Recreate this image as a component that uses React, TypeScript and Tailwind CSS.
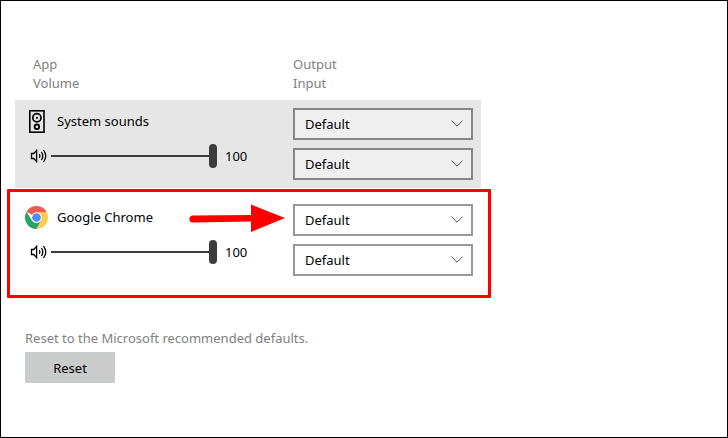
import { useId, useState } from 'react';
import type { ReactNode } from 'react';
import { clsx } from 'clsx';

function SpeakerIcon() {
  return (
    <svg viewBox="0 0 23 23" className="w-[23px] h-[23px]" fill="none" stroke="black" aria-hidden="true">
      <rect x="4.8" y="0.8" width="14.2" height="21.4" strokeWidth="1.6" />
      <circle cx="11.9" cy="7.8" r="4.1" strokeWidth="1.7" />
      <circle cx="11.9" cy="7.8" r="1.1" fill="black" stroke="none" />
      <circle cx="11.9" cy="16.8" r="2.3" strokeWidth="1.8" />
    </svg>
  );
}

function ChromeIcon() {
  return (
    <svg viewBox="0 0 48 48" className="w-[23px] h-[23px]" aria-hidden="true">
      <path d="M24 24 L3.2 12 A24 24 0 0 1 44.8 12 Z" fill="#ef5b52" />
      <path d="M24 13 H45.3 A24 24 0 0 1 24 48 L33.5 29.5 Z" fill="#ffcd4a" />
      <path d="M3.2 12 L14.5 29.5 A11 11 0 0 0 33.5 29.5 L24 48 A24 24 0 0 1 3.2 12 Z" fill="#2ba567" />
      <circle cx="24" cy="24" r="11" fill="white" />
      <circle cx="24" cy="24" r="9" fill="#4f8bf5" />
    </svg>
  );
}

function VolumeIcon() {
  return (
    <svg viewBox="0 0 18 14" className="w-[18px] h-3.5" fill="none" stroke="black" strokeWidth="1.3" aria-hidden="true">
      <path d="M1.5 4.5 H3.8 L6.6 1.4 V12.6 L3.8 9.5 H1.5 Z" />
      <path d="M9.3 5 Q10.7 7 9.3 9" />
      <path d="M11.4 3 Q14.2 7 11.4 11" />
      <path d="M13.5 1.2 Q18 7 13.5 12.8" />
    </svg>
  );
}

interface DeviceSelectProps {
  label: string;
  shaded?: boolean;
}

function DeviceSelect({ label, shaded }: DeviceSelectProps) {
  return (
    <div className="relative">
      <select
        aria-label={label}
        className={clsx(
          'block w-full h-8 appearance-none border-2 pl-2.5 pr-8 text-black',
          shaded ? 'bg-[#efefef] border-[#868686]' : 'bg-white border-[#999999]'
        )}
      >
        <option>Default</option>
      </select>
      <svg
        viewBox="0 0 12 7"
        className="absolute right-2.5 top-3 w-3 h-[7px] pointer-events-none"
        fill="none"
        stroke="#555555"
        aria-hidden="true"
      >
        <path d="M0.4 0.6 L6 6.2 L11.6 0.6" />
      </svg>
    </div>
  );
}

interface AppRowProps {
  name: string;
  icon: ReactNode;
  shaded?: boolean;
  children?: ReactNode;
}

function AppRow({ name, icon, shaded, children }: AppRowProps) {
  const [volume, setVolume] = useState(100);
  const id = useId();

  return (
    <section className={clsx('relative flex px-2 py-2', shaded && 'bg-[#e6e6e6]')}>
      <div className="flex-1 pl-0.5">
        <label htmlFor={id} className="flex items-center gap-2 h-[26px]">
          <span className="w-6">{icon}</span>
          {name}
        </label>
        <div className="flex items-center mt-2.5 pl-[5px]">
          <VolumeIcon />
          <input
            id={id}
            type="range"
            value={volume}
            onChange={(e) => setVolume(Number(e.target.value))}
            className="ml-[3px] w-[166px] h-6 appearance-none bg-transparent [&::-webkit-slider-runnable-track]:h-0.5 [&::-webkit-slider-runnable-track]:bg-[#3c3c3c] [&::-webkit-slider-thumb]:appearance-none [&::-webkit-slider-thumb]:w-2 [&::-webkit-slider-thumb]:h-6 [&::-webkit-slider-thumb]:-mt-[11px] [&::-webkit-slider-thumb]:rounded-full [&::-webkit-slider-thumb]:bg-[#3c3c3c]"
          />
          <output htmlFor={id} className="ml-2">{volume}</output>
        </div>
      </div>
      <div className="flex flex-col gap-2 w-[180px]">
        <DeviceSelect label={`${name} output`} shaded={shaded} />
        <DeviceSelect label={`${name} input`} shaded={shaded} />
      </div>
      {children}
    </section>
  );
}

function Callout() {
  return (
    <>
      <div className="absolute -left-2 -right-2.5 -top-[7px] -bottom-3.5 border-3 border-[#ff0000] rounded-[1px] pointer-events-none" />
      <svg
        viewBox="0 0 96 28"
        className="absolute right-[196px] top-2 w-24 h-7 pointer-events-none"
        fill="#ff0000"
        aria-hidden="true"
      >
        <path d="M4 11.4 L62 10.9 V0.5 L96 14 L62 28 V17.6 L4 18.6 A3.6 3.6 0 0 1 4 11.4 Z" />
      </svg>
    </>
  );
}

function App() {
  return (
    <main className="min-h-screen bg-white border border-black pl-3.5 pr-4 pt-[54px] pb-8 font-['Noto_Sans','Open_Sans',sans-serif] text-[13px] leading-5 text-black">
      <div className="max-w-[466px]">
        <div className="flex pl-[18px] pr-2 pb-[7px] leading-[19px] text-[#808080]">
          <div className="flex-1">
            <p>App</p>
            <p>Volume</p>
          </div>
          <div className="w-[180px]">
            <p>Output</p>
            <p>Input</p>
          </div>
        </div>

        <div className="flex flex-col gap-2">
          <AppRow name="System sounds" icon={<SpeakerIcon />} shaded />
          <AppRow name="Google Chrome" icon={<ChromeIcon />}>
            <Callout />
          </AppRow>
        </div>
      </div>

      <div className="pl-2.5 pt-11">
        <p className="text-[#808080]">Reset to the Microsoft recommended defaults.</p>
        <button type="button" className="mt-1 w-[90px] h-[31px] bg-[#cacccb]">
          Reset
        </button>
      </div>
    </main>
  );
}

export default App;
